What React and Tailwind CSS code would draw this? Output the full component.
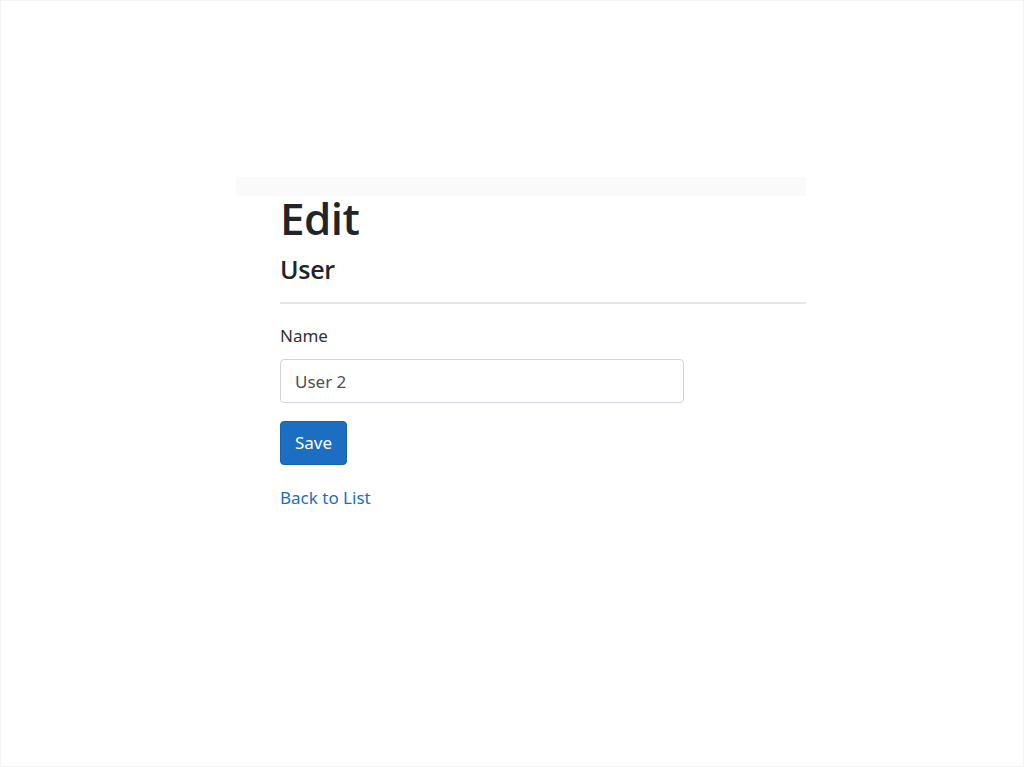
import React, { useState } from "react";

const App = () => {
  const [name, setName] = useState("User 2");

  return (
    <div
      className="w-full h-[767px] bg-white border border-[#f3f3f3] text-[#212529]"
      style={{ fontFamily: '"Noto Sans", "Open Sans", sans-serif' }}
    >
      {/* --- Top strip --- */}
      <div className="ml-[235px] mt-[176px] w-[570px] h-[19px] bg-[#fafafa]" />

      {/* --- Page content --- */}
      <div className="ml-[279px] w-[526px] flex flex-col">
        <h1
          className="text-[44px] font-semibold leading-[45px] tracking-[-0.6px]"
          style={{ fontFamily: '"Open Sans", "Noto Sans", sans-serif' }}
        >
          Edit
        </h1>
        <h4
          className="mt-[13px] text-[25px] font-semibold leading-[30px] tracking-[-0.3px]"
          style={{ fontFamily: '"Open Sans", "Noto Sans", sans-serif' }}
        >
          User
        </h4>
        <hr className="mt-[18px] border-t-2 border-[#e6e6e6]" />

        <form className="mt-[20px] w-[404px] flex flex-col" onSubmit={(e) => e.preventDefault()}>
          <label className="text-[17px] leading-[24px] text-[#333]">Name</label>
          <input
            value={name}
            onChange={(e) => setName(e.target.value)}
            className="mt-[11px] h-[44px] px-[14px] rounded-[4px] border border-[#ced4da] text-[17px] text-[#495057] outline-none"
          />
          <button
            type="submit"
            className="mt-[18px] self-start h-[44px] px-[14px] rounded-[4px] bg-[#1b6ec2] border border-[#1861ac] text-white text-[17px]"
          >
            Save
          </button>
        </form>

        <a href="#" className="mt-[21px] self-start text-[17px] leading-[24px] text-[#1b6ec2]">
          Back to List
        </a>
      </div>
    </div>
  );
};

export default App;
